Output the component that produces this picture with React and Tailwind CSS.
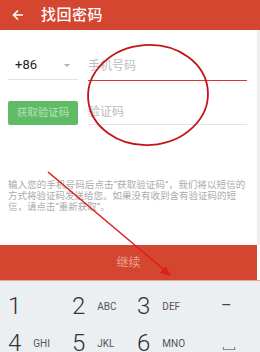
import React from 'react';

const keys = [
  [['1', ''], ['2', 'ABC'], ['3', 'DEF'], ['–', null]],
  [['4', 'GHI'], ['5', 'JKL'], ['6', 'MNO'], ['␣', null]],
];

const App = () => {
  return (
    <div
      className="relative w-[260px] h-[352px] overflow-hidden bg-white"
      style={{ fontFamily: 'Roboto, "Noto Sans CJK SC", sans-serif' }}
    >
      {/* header */}
      <div className="h-[30px] bg-[#d4462f] flex items-center text-white">
        <svg width="12" height="12" viewBox="0 0 12 12" className="ml-[12px]">
          <path d="M11 6H2M6 1.5L1.5 6L6 10.5" stroke="#fff" strokeWidth="1.6" fill="none" />
        </svg>
        <span className="ml-[17px] text-[15px] leading-none font-medium tracking-[0.5px]">找回密码</span>
      </div>

      {/* form */}
      <div className="h-[215px] border-r-[3px] border-[#eeeeee] px-[8px]">
        <div className="flex gap-[10px] pt-[21px]">
          <div className="w-[70px] h-[29px] border-b border-[#e2e2e2] flex items-center justify-between pl-[7px] pr-[8px]">
            <span className="text-[13px] text-[#222]">+86</span>
            <span className="w-0 h-0 border-l-[3px] border-r-[3px] border-t-[3px] border-transparent border-t-[#b0b0b0]" />
          </div>
          <div className="w-[159px] h-[30px] border-b border-[#d8392c] flex items-center">
            <span className="text-[12px] text-[#bdbdbd]">手机号码</span>
          </div>
        </div>
        <div className="flex gap-[10px] mt-[19px] items-end">
          <div className="w-[70px] h-[24px] rounded-[2px] bg-[#5fbc65] flex items-center justify-center">
            <span className="text-[10.5px] text-[#b5e0b6]">获取验证码</span>
          </div>
          <div className="w-[159px] h-[25px] border-b border-[#e4e4e4] flex items-center">
            <span className="text-[12px] text-[#bdbdbd]">验证码</span>
          </div>
        </div>
        <p className="mt-[54px] text-[9.5px] leading-[11px] text-[#ababab] whitespace-nowrap">
          <span className="block tracking-[0.1px]">输入您的手机号码后点击“获取验证码”，我们将以短信的</span>
          <span className="block">方式将验证码发送给您。如果没有收到含有验证码的短</span>
          <span className="block">信，请点击“重新获取”。</span>
        </p>
      </div>

      {/* continue */}
      <div className="h-[35px] w-[257px] bg-[#d4462f] flex items-center justify-center">
        <span className="text-[12px] text-[#eb9f90]">继续</span>
      </div>

      {/* keypad */}
      <div className="h-[72px] bg-[#eceff1] border-t border-[#e6a89a] grid grid-cols-4 pt-[14px] gap-y-[15px]">
        {keys.map((row) =>
          row.map(([d, l], i) => (
            <div
              key={d}
              className={`flex items-center h-[22px] ${i === 0 ? 'pl-[8px]' : i === 3 ? 'pl-[26px]' : 'pl-[7px]'}`}
            >
              {l === null ? (
                <span className="text-[16px] text-[#444] leading-none">{d}</span>
              ) : (
                <>
                  <span className="text-[24px] font-light text-[#333] leading-none">{d}</span>
                  {l && <span className="ml-[12px] text-[10px] text-[#555]">{l}</span>}
                </>
              )}
            </div>
          ))
        )}
      </div>

      {/* hand-drawn annotations */}
      <svg className="absolute inset-0 pointer-events-none" width="260" height="352">
        <ellipse cx="148" cy="95" rx="60" ry="50" transform="rotate(-4 148 95)" fill="none" stroke="#c4141a" strokeWidth="1.8" />
        <line x1="48" y1="172" x2="168" y2="273" stroke="#e01e1e" strokeWidth="1.6" />
        <path d="M171 276L160 273L166 266Z" fill="#e01e1e" />
      </svg>
    </div>
  );
};

export default App;
